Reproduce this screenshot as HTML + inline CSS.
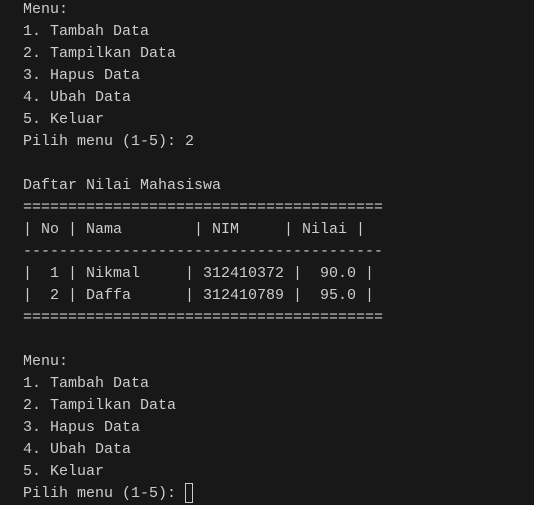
<!DOCTYPE html>
<html><head><meta charset="utf-8"><style>
html,body{margin:0;padding:0;background:#181818;width:534px;height:503px;overflow:hidden}
pre{margin:0;position:absolute;left:23px;top:-1px;font-family:"Liberation Mono",monospace;font-size:15px;line-height:22px;color:#cccccc;letter-spacing:0}
.cur{display:inline-block;width:8px;height:20px;border:1px solid #cccccc;vertical-align:-6px;box-sizing:border-box}
</style></head><body><pre>Menu:
1. Tambah Data
2. Tampilkan Data
3. Hapus Data
4. Ubah Data
5. Keluar
Pilih menu (1-5): 2

Daftar Nilai Mahasiswa
========================================
| No | Nama        | NIM     | Nilai |
----------------------------------------
|  1 | Nikmal     | 312410372 |  90.0 |
|  2 | Daffa      | 312410789 |  95.0 |
========================================

Menu:
1. Tambah Data
2. Tampilkan Data
3. Hapus Data
4. Ubah Data
5. Keluar
Pilih menu (1-5): <span class="cur"></span></pre></body></html>
